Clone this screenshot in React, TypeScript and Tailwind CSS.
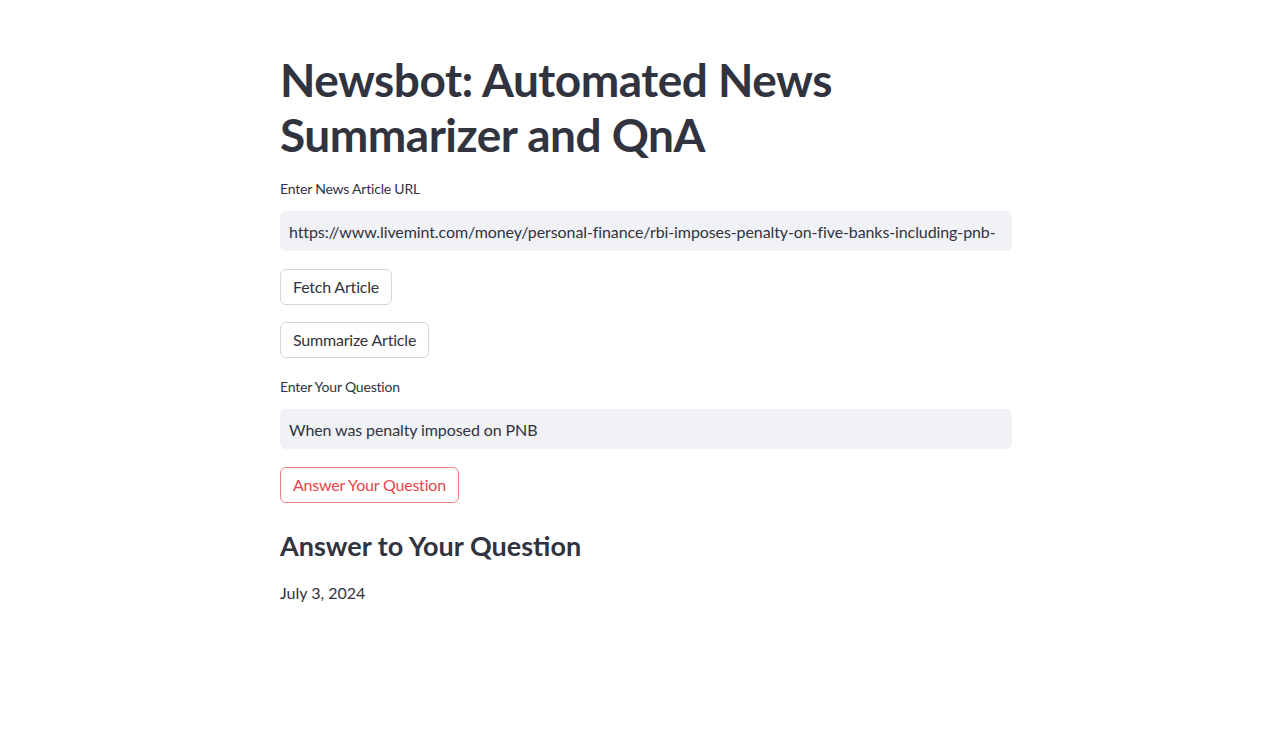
import { useState } from 'react';

export default function App() {
  const [url, setUrl] = useState(
    'https://www.livemint.com/money/personal-finance/rbi-imposes-penalty-on-five-banks-including-pnb-'
  );
  const [question, setQuestion] = useState('When was penalty imposed on PNB');

  return (
    <div className="min-h-screen bg-white text-[#31333f] font-['Lato',sans-serif]">
      <div className="ml-[280px] w-[732px] pt-[52px]">
        {/* Title */}
        <h1 className="text-[46px] leading-[55px] font-bold tracking-[-0.5px]">
          Newsbot: Automated News Summarizer and QnA
        </h1>

        {/* URL input */}
        <label className="mt-[17px] block h-5 text-sm leading-5 tracking-[-0.2px]">Enter News Article URL</label>
        <input
          className="mt-3 block h-10 w-full rounded-md bg-[#f0f2f6] px-[9px] text-base tracking-[-0.1px] outline-none"
          value={url}
          onChange={(e) => setUrl(e.target.value)}
        />

        {/* Actions */}
        <button className="mt-[18px] block h-9 rounded-md border border-[#d6d6d9] bg-white px-3 text-base tracking-[-0.2px]">
          Fetch Article
        </button>
        <button className="mt-[17px] block h-9 rounded-md border border-[#d6d6d9] bg-white px-3 text-base tracking-[-0.2px]">
          Summarize Article
        </button>

        {/* Question input */}
        <label className="mt-[19px] block h-5 text-sm leading-5 tracking-[-0.2px]">Enter Your Question</label>
        <input
          className="mt-3 block h-10 w-full rounded-md bg-[#f0f2f6] px-[9px] text-base tracking-[-0.1px] outline-none"
          value={question}
          onChange={(e) => setQuestion(e.target.value)}
        />
        <button className="mt-[18px] block h-9 rounded-md border border-[#f08080] bg-white px-3 text-base tracking-[-0.2px] text-[#e8444a]">
          Answer Your Question
        </button>

        {/* Answer */}
        <h3 className="mt-[25px] text-[27px] leading-9 font-bold">Answer to Your Question</h3>
        <p className="mt-[17px] text-base leading-6">July 3, 2024</p>
      </div>
    </div>
  );
}
